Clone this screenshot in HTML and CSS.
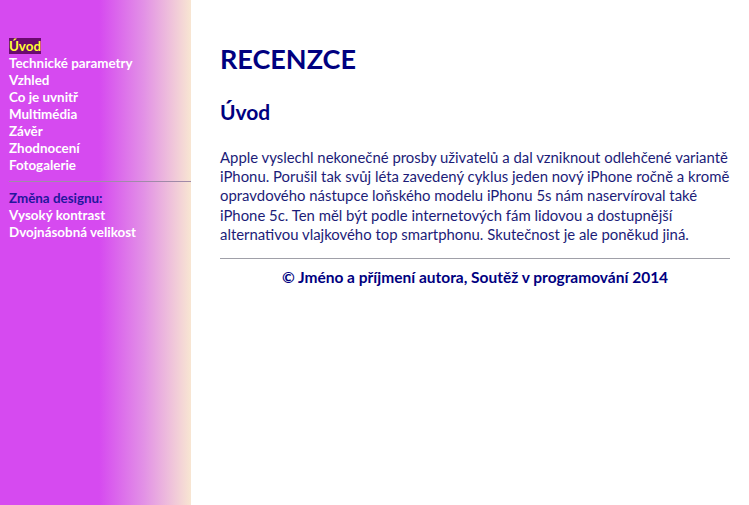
FILE: index.html
```html
<!DOCTYPE html>
<html lang="cs">
<head>
<meta charset="utf-8">
<title>Recenzce</title>
<link rel="stylesheet" href="styles.css">
</head>
<body>
<div class="page">
  <nav class="sidebar">
    <ul class="menu">
      <li><a class="active" href="#">Úvod</a></li>
      <li><a href="#">Technické parametry</a></li>
      <li><a href="#">Vzhled</a></li>
      <li><a href="#">Co je uvnitř</a></li>
      <li><a href="#">Multimédia</a></li>
      <li><a href="#">Závěr</a></li>
      <li><a href="#">Zhodnocení</a></li>
      <li><a href="#">Fotogalerie</a></li>
    </ul>
    <hr class="side-rule">
    <div class="design-title">Změna designu:</div>
    <ul class="menu">
      <li><a href="#">Vysoký kontrast</a></li>
      <li><a href="#">Dvojnásobná velikost</a></li>
    </ul>
  </nav>
  <main class="content">
    <h1 class="title">RECENZCE</h1>
    <h2 class="subtitle">Úvod</h2>
    <p class="text">Apple vyslechl nekonečné prosby uživatelů a dal vzniknout odlehčené variantě iPhonu. Porušil tak svůj léta zavedený cyklus jeden nový iPhone ročně a kromě opravdového nástupce loňského modelu iPhonu 5s nám naservíroval také iPhone 5c. Ten měl být podle internetových fám lidovou a dostupnější alternativou vlajkového top smartphonu. Skutečnost je ale poněkud jiná.</p>
    <hr class="main-rule">
    <footer class="footer">© Jméno a příjmení autora, Soutěž v programování 2014</footer>
  </main>
</div>
</body>
</html>
```
FILE: styles.css
```css
html, body {
  margin: 0;
  padding: 0;
  background: #ffffff;
}
body {
  font-family: Lato, "Open Sans", sans-serif;
}
.page {
  display: flex;
  min-height: 505px;
}
.sidebar {
  width: 182px;
  flex: none;
  padding: 38px 0 0 9px;
  background: linear-gradient(to right, #d64af0 0%, #d64af0 52%, #e290e6 75%, #f8e6d2 100%);
}
.menu {
  list-style: none;
  margin: 0;
  padding: 0;
}
.menu li {
  line-height: 17px;
  font-size: 13.4px;
  font-weight: bold;
}
.menu a {
  color: #ffffff;
  text-decoration: none;
}
.menu a.active {
  color: #ffff33;
  background: #6a0a6e;
}
.side-rule {
  margin: 7px 0 8px 0;
  border: 0;
  border-top: 1px solid #a08aa8;
  height: 0;
}
.design-title {
  color: #24169c;
  font-size: 13.4px;
  font-weight: bold;
  line-height: 17px;
}
.content {
  flex: 1;
  padding: 0 19px 0 29px;
  color: #000080;
}
.title {
  margin: 42px 0 0 0;
  font-size: 27px;
  line-height: 34px;
  font-weight: bold;
}
.subtitle {
  margin: 22px 0 0 0;
  font-size: 21px;
  line-height: 28px;
  font-weight: bold;
}
.text {
  margin: 22px 0 0 0;
  font-size: 14.9px;
  line-height: 19.2px;
  color: #1c1c78;
}
.main-rule {
  margin: 14px 0 0 0;
  border: 0;
  border-top: 1px solid #a0a0a8;
  height: 0;
}
.footer {
  margin-top: 9px;
  text-align: center;
  font-size: 15.5px;
  font-weight: bold;
  line-height: 18px;
}
```
